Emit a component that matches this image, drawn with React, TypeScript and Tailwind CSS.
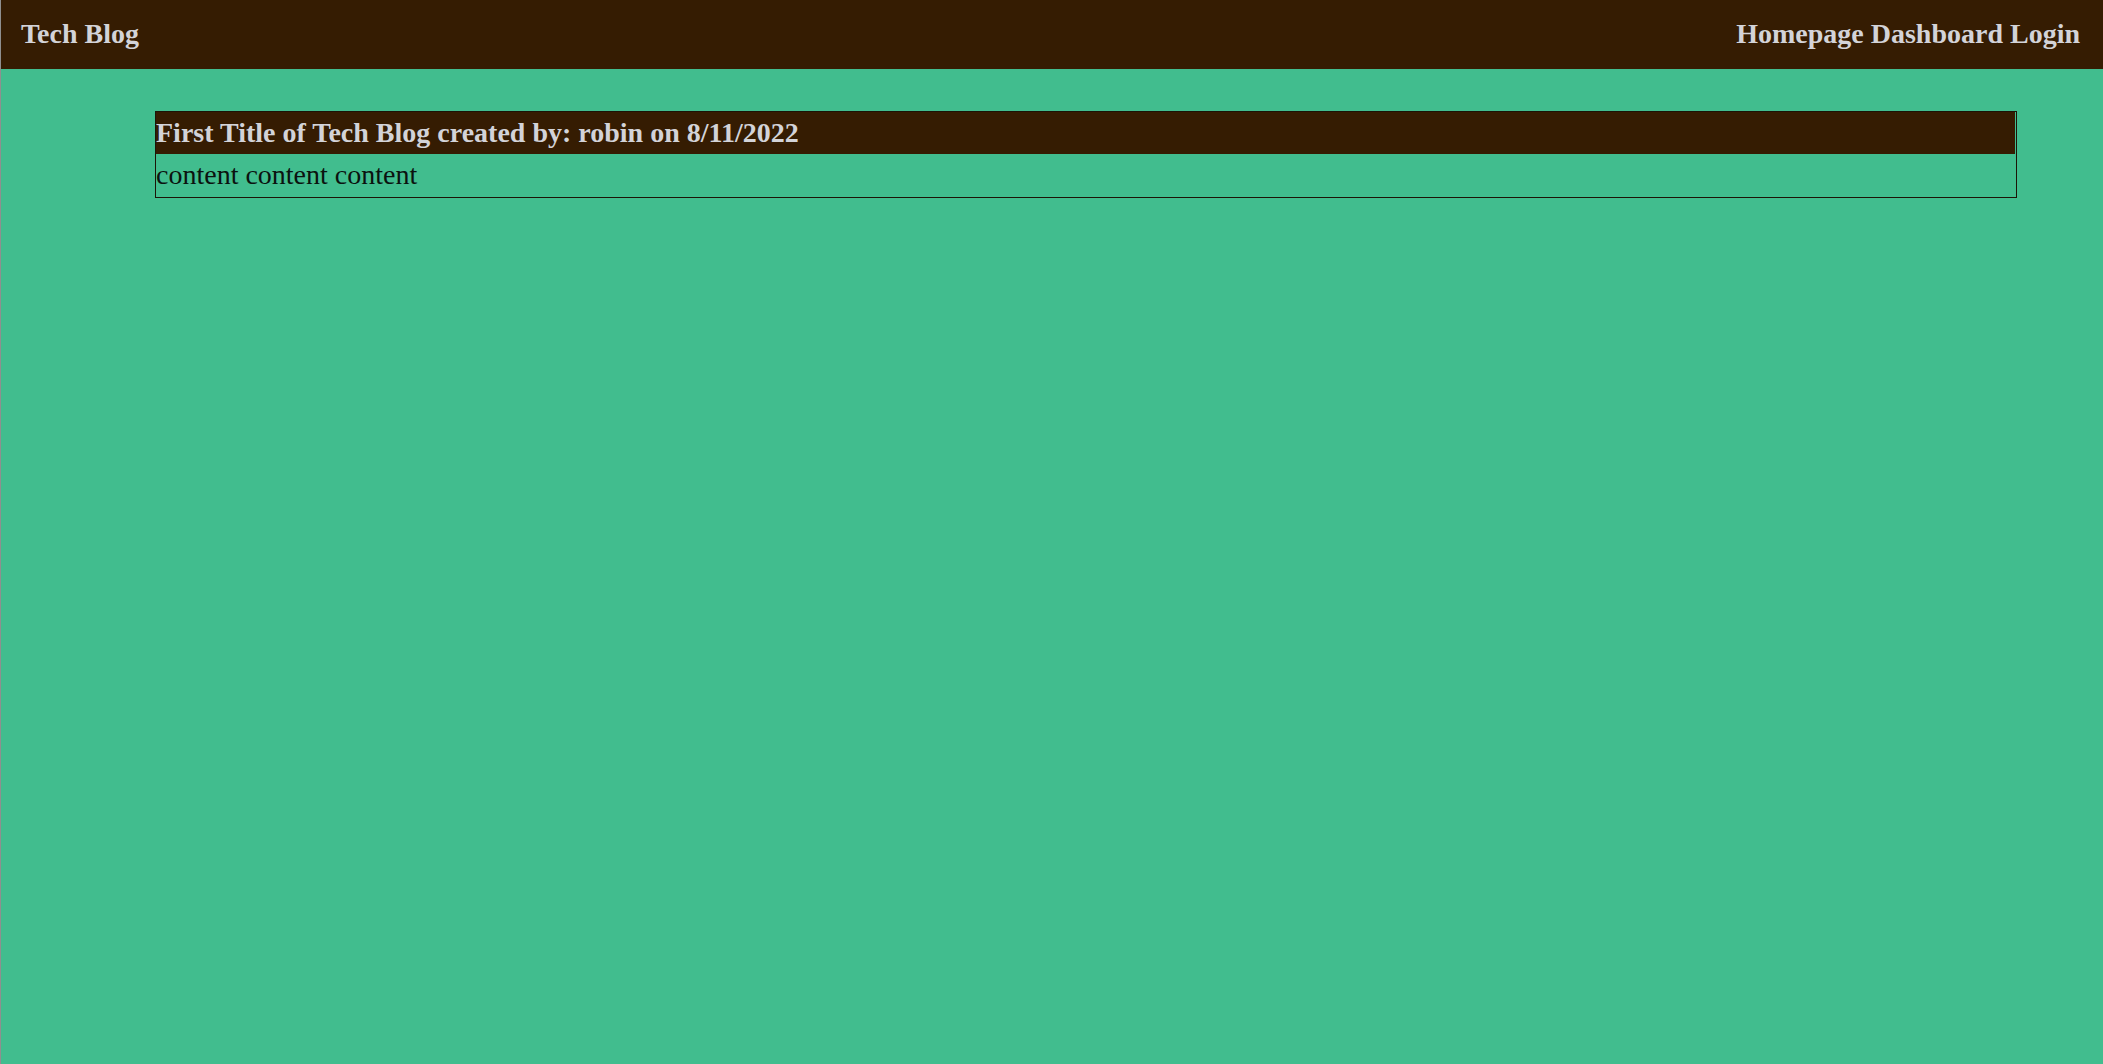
const NAV_LINKS = ["Homepage", "Dashboard", "Login"];

const posts = [
  {
    title: "First Title of Tech Blog",
    author: "robin",
    date: "8/11/2022",
    content: "content content content",
  },
];

const App = () => {
  return (
    <div className="min-h-screen bg-[#41bd8e] border-l border-[#8f8f8f] font-['Liberation_Serif',serif] text-[28px] leading-[1.5]">
      <header className="bg-[#351c02] flex items-center justify-between pl-[20px] pr-[23px] pt-[13px] pb-[14px]">
        <a className="font-bold text-[#d3d3d8]" href="#">
          Tech Blog
        </a>
        <nav className="flex gap-[7px] font-bold text-[#d3d3d8]">
          {NAV_LINKS.map((link) => (
            <a key={link} href="#">
              {link}
            </a>
          ))}
        </nav>
      </header>
      <main className="pt-[42px] pl-[154px]">
        {posts.map((post) => (
          <article
            key={post.title}
            className="w-[1862px] border border-[#1c1407]"
          >
            <h2 className="bg-[#351c02] mr-px font-bold text-[#d3d3d8]">
              {post.title} created by: {post.author} on {post.date}
            </h2>
            <p className="h-[43px] text-[#0b120f]">{post.content}</p>
          </article>
        ))}
      </main>
    </div>
  );
};

export default App;
